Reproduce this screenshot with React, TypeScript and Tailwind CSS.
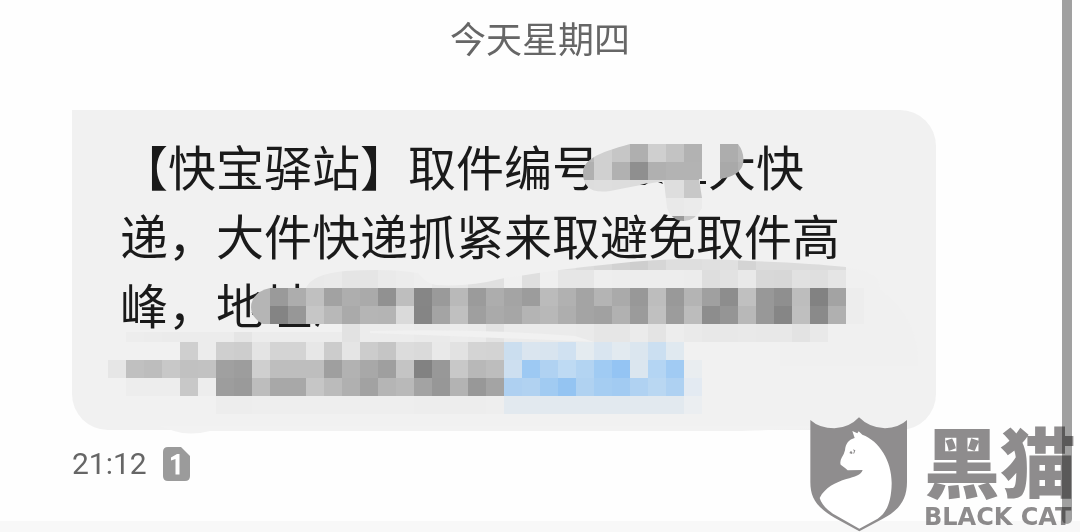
type CellRow = { x: number; y: number; h?: number; cells: string };

const CELL = 18;

// Each token is one mosaic cell: two digits are a grey level, six a full colour, "-" is empty.
const topRows: CellRow[] = [
  { x: 576, y: 144, cells: 'b8 d0 c6 af cf c3 b2 f1 ad b8' },
  { x: 576, y: 162, cells: 'b0 d0 b1 8f b0 b3 b3 f1 a9 b3' },
  { x: 576, y: 180, cells: 'dd de dd dc dd de c8 f1 f1 f1' },
  { x: 576, y: 198, cells: '- - - - e9 e9 eb' },
  { x: 576, y: 216, cells: '- - - - 9a 9a c8' },
];

const haloRows: CellRow[] = [
  { x: 306, y: 252, cells: 'ea ea e6 e6 ea ec f0 - - - - - - - e0 dc d8 d2 ce d6 de de e0 e0 d4 dc dc dc dc dc' },
  { x: 306, y: 270, cells: 'e9 ea e5 e5 ea ec ee e8 e8 e0 e0 f0 df ef e6 e6 ee ed ed ed ed ec de e2 e9 d8 d7 e1 df e5' },
];

const textRows: CellRow[] = [
  { x: 270, y: 288, cells: '9a ad c0 a2 ae aa 91 be 86 9a b9 9b ad a4 9c bb b1 a4 b4 aa 98 bd 99 b4 a0 8d c0 98 8f bd 82 a3 ed' },
  { x: 270, y: 306, cells: '84 97 c6 b8 aa b5 b4 da 85 a4 c0 9f aa a6 b4 b8 ae a4 a1 b1 9b c0 9c bc 8d 95 b8 98 86 bf 8a b0 ed' },
  { x: 126, y: 332, h: 10, cells: 'ed ec eb ec ec ec e5 ec ec ec ec ec' },
  { x: 342, y: 324, cells: 'e2 ec ec ec ea ea ec eb e3 eb eb eb eb ea e6 e6 eb e4 ed ea e8 e8 e9 e8 e8 e3 e9' },
  { x: 180, y: 342, cells: 'cf ec cf cd e4 d4 d4 e7 cc e5 cc c5 dc da e9 e2 d4 d3 cbdeef dae5ef d8e4ef d0e1f1 e4ebf0 d9e5f0 e2eaf0 dbe6ef cbdff1 e0e9f0' },
  { x: 108, y: 360, cells: 'e6 c0 bd c8 c1 c2 a0 9d cf be be be 9f b2 a8 9f c4 82 98 c8 b8 bd cddff0 9dc9f3 b0d2f2 bedaf3 b3d4f2 a0cbf3 94c4f3 dbe6ef b4d5f3 a1cbf3 e9edf0' },
  { x: 126, y: 378, cells: 'ed ed ed c8 ed 9d 9a bd a8 a8 c6 bb b0 a2 b5 b9 a3 97 b3 98 a4 aed0f1 b1d2f1 a1cbf2 94c4f2 b0d2f1 a5cdf2 a2cbf2 b0d2f2 b9d7f2 aed1f2 e3eaf2' },
  { x: 216, y: 396, cells: 'ed ed ee ee ee ee ee ee ee ee ee ed ed ed ed ee e2e9ef e2e9ef e2e9ef e2e9ef e2e9ef e2e9ef e2e9ef e2e9ef e2e9ef e2e9ef ebeef1' },
];

function Cells({ rows }: { rows: CellRow[] }) {
  return (
    <>
      {rows.map((row) =>
        row.cells.split(' ').map((c, i) =>
          c === '-' ? null : (
            <rect
              key={`${row.y}-${i}`}
              x={row.x + i * CELL}
              y={row.y}
              width={CELL}
              height={row.h ?? CELL}
              fill={c.length === 2 ? `#${c}${c}${c}` : `#${c}`}
            />
          ),
        ),
      )}
    </>
  );
}

function Mosaic() {
  return (
    <svg
      className="pointer-events-none absolute left-0 top-0"
      width="864"
      height="326"
      viewBox="72 110 864 326"
      aria-hidden="true"
    >
      <defs>
        <clipPath id="top-stroke">
          <path d="M583 173C583 160 597 153 630 144H738Q745 153 743 164Q740 176 720 179L699 179L702 198V208Q695 221 684 221Q672 221 667 208L664 181Q640 185 610 191Q583 195 583 173Z" />
        </clipPath>
        <clipPath id="halo">
          <path d="M306 288Q312 274 345 271Q390 268 418 273Q427 284 436 285Q470 287 500 279Q560 269 612 264Q680 256 750 261Q810 263 846 267V288Z" />
        </clipPath>
      </defs>

      {/* faint smear left by the brush */}
      <path d="M160 426H880L740 431H210Q190 436 174 431Z" fill="#f2f2f2" />
      <path d="M846 268Q880 270 880 290Q920 320 918 366H780V288H846Z" fill="#f0f0f0" />

      <g clipPath="url(#top-stroke)" shapeRendering="crispEdges">
        <Cells rows={topRows} />
      </g>
      <g fill="#1a1a1a">
        <path d="M640 185L648 183L645 185Z" />
        <path d="M658 182L662 182L663 184Z" />
        <rect x="700" y="181" width="6" height="3" />
        <path d="M315 325L317 322L320 323L318 327Z" />
      </g>

      <g clipPath="url(#halo)" shapeRendering="crispEdges">
        <Cells rows={haloRows} />
      </g>
      <path d="M270 288V324H263Q251 318 251 307Q252 292 270 288Z" fill="#b5b5b5" />
      <g shapeRendering="crispEdges">
        <Cells rows={textRows} />
      </g>
      <path d="M370 331Q470 328 575 336L594 342Q480 337 370 333Z" fill="#f1f1f1" />
    </svg>
  );
}

function SimIcon() {
  return (
    <svg width="27" height="34" viewBox="0 0 27 34" role="img" aria-label="SIM 1">
      <path d="M5 0H18L27 9V29Q27 34 22 34H5Q0 34 0 29V5Q0 0 5 0Z" fill="#9b9b9b" />
      <path d="M8 10.5L14 7H16.5V27.5H12.5V12L8 13.5Z" fill="#fff" />
    </svg>
  );
}

function Shield() {
  return (
    <svg width="98" height="115" viewBox="33 50 294 345" aria-hidden="true">
      <path
        d="M34 59Q62 84 106 84Q150 83 180 51Q212 83 258 84Q300 82 324 59V245C324 302 296 332 250 356L181 393L108 353C52 320 34 292 34 245Z"
        fill="#8f8d8e"
      />
      <path
        d="M167 113L160 92L175 99L179 93L190 103C242 122 279 184 278 250C277 305 262 338 236 355L181 385L110 345C86 331 68 313 62 293C77 262 110 246 142 236C168 229 186 224 191 209L146 210Q138 202 125 193Q122 183 128 172Q136 160 138 150C140 128 150 118 167 113Z"
        fill="#fff"
      />
      <path d="M151 158L156 151L161 158L158 161Z M162 147L169 150L166 159L162 160L165 153Z" fill="#8f8d8e" />
    </svg>
  );
}

function Watermark() {
  return (
    <div className="absolute bottom-0 right-1 flex items-end gap-4 text-[#8f8d8e]">
      <Shield />
      <div className="flex flex-col gap-1 whitespace-nowrap mix-blend-multiply">
        <span className="font-['Noto_Sans_CJK_SC',sans-serif] text-[76px] font-black leading-[78px]">黑猫</span>
        <span className="font-['DejaVu_Sans',sans-serif] text-2xl font-bold leading-[30px]">BLACK CAT</span>
      </div>
    </div>
  );
}

export default function App() {
  return (
    <main className="relative flex min-h-screen flex-col overflow-hidden bg-[#fefefe] font-['Roboto','Noto_Sans_CJK_SC',sans-serif]">
      <h1 className="pt-4 text-center text-4xl font-normal leading-[50px] text-[#666]">今天星期四</h1>

      <section className="relative ml-18 mr-36 mt-11 rounded-[36px] rounded-tl-none bg-[#f1f1f1] px-12 pb-[92px] pt-[21px]">
        <p className="whitespace-nowrap font-['Noto_Sans_CJK_SC',sans-serif] text-5xl leading-[69px] text-[#1a1a1a]">
          【快宝驿站】取件编号
          <span className="inline-block w-[108px]" />
          大快
          <br />
          递，大件快递抓紧来取避免取件高
          <br />
          峰，地址
        </p>
        <Mosaic />
      </section>

      <div className="ml-18 mt-4 flex items-center gap-4 text-[30px] leading-9 text-[#666]">
        <time>21:12</time>
        <SimIcon />
      </div>

      <footer className="mt-auto h-[11px] bg-[#f8f8f8]" />

      <div className="absolute bottom-2 right-2 top-0 w-[10px] rounded-b-full bg-[#a0a0a0]" />
      <Watermark />
    </main>
  );
}
